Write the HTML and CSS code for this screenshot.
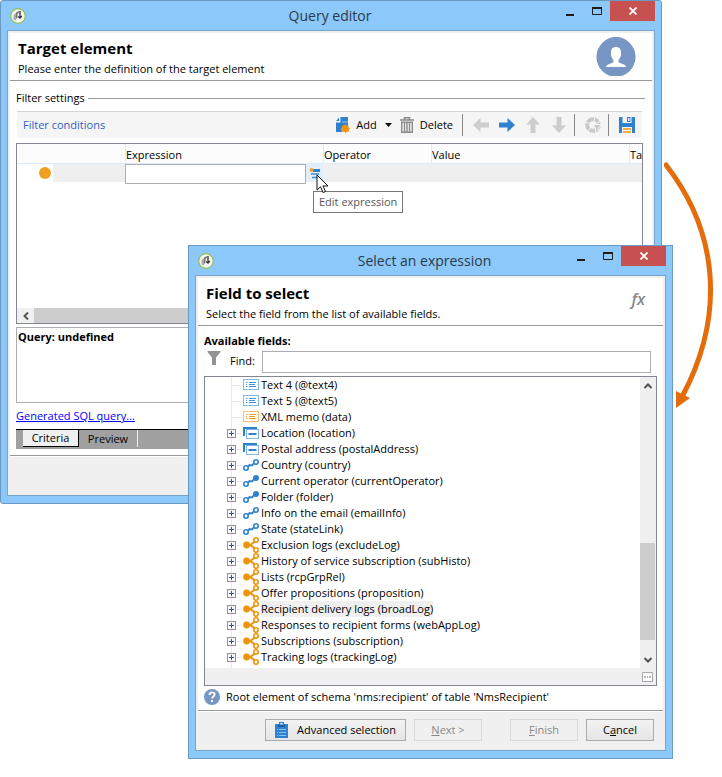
FILE: index.html
```html
<!DOCTYPE html>
<html lang="en">
<head>
<meta charset="utf-8">
<title>Query editor</title>
<link rel="stylesheet" href="styles.css">
</head>
<body>
<svg class="defs" aria-hidden="true">
  <symbol id="app" viewBox="0 0 16 16"><circle cx="8" cy="8" r="7.3" fill="#f4f4f0" stroke="#93bd58" stroke-width="1.2"/><path d="M3.500 7l2.500-2v7.500L3.500 11.500z" fill="#aaa"/><path d="M6 4.500l3-1.500v1.500L7.500 6v3L6 11.500z" fill="#777"/><path d="M10 3v6.500M8 8.500l2 1.500 1.800-2" stroke="#333" stroke-width="1.300" fill="none"/></symbol>
  <symbol id="field" viewBox="0 0 16 12"><rect x=".5" y=".5" width="15" height="10" fill="#fff" stroke="currentColor" stroke-opacity=".65"/><path d="M3 3.500h1.500M3 7.500h1.500M6 3.500h7M6 7.500h7M3 5.500h1M6 5.500h6" stroke="currentColor"/></symbol>
  <symbol id="group" viewBox="0 0 16 12"><path d="M1 9V1h13" fill="none" stroke="#2f80cf" stroke-width="2"/><rect x="3.500" y="2.500" width="12" height="9" fill="#fff" stroke="#80b4e6"/><path d="M5.500 7h8" stroke="#2f80cf" stroke-width="2"/></symbol>
  <symbol id="link" viewBox="0 0 16 12"><path d="M5 7.500L6.500 6l2.500.5L11 4" fill="none" stroke="#2f80cf" stroke-width="1.800"/><circle cx="3" cy="9" r="2.200" fill="#fff" stroke="#2f80cf" stroke-width="1.600"/><circle cx="13" cy="3" r="2.200" fill="#fff" stroke="#2f80cf" stroke-width="1.600"/></symbol>
  <symbol id="linkfull" viewBox="0 0 16 12"><path d="M5 7.500L6.500 6l2.500.5L11 4" fill="none" stroke="#2f80cf" stroke-width="1.800"/><circle cx="3" cy="9" r="2.200" fill="#fff" stroke="#2f80cf" stroke-width="1.600"/><circle cx="13" cy="3" r="3" fill="#2f80cf"/></symbol>
  <symbol id="many" viewBox="0 0 16 16"><path d="M4 8l4-.5L11.500 4.500M4 8l4 .5 3.500 3" fill="none" stroke="#ee9408" stroke-width="2"/><circle cx="3.600" cy="8" r="3.400" fill="#ee9408"/><circle cx="13" cy="3" r="2.200" fill="#fff" stroke="#ee9408" stroke-width="1.600"/><circle cx="13" cy="13" r="2.200" fill="#fff" stroke="#ee9408" stroke-width="1.600"/></symbol>
  <symbol id="arrow" viewBox="0 0 16 16"><path d="M0 5.500h8.500V1L16 8l-7.500 7v-4.500H0z" fill="currentColor"/></symbol>
  <symbol id="min" viewBox="0 0 8 12"><path d="M0 10h8" stroke="#1c1c1c" stroke-width="2"/></symbol>
  <symbol id="max" viewBox="0 0 10 8"><path d="M.5 1h9v6.500h-9z" fill="none" stroke="#1c1c1c"/><path d="M0 1h10" stroke="#1c1c1c" stroke-width="2"/></symbol>
  <symbol id="close" viewBox="0 0 8 8"><path d="M.5.5l7 7M7.500.5l-7 7" stroke="#fff" stroke-width="1.800"/></symbol>
</svg>

<main class="desktop">
<section class="window editor" aria-label="Query editor">
  <header class="titlebar">
    <svg class="app"><use href="#app"/></svg>
    <h1>Query editor</h1>
    <div class="controls">
      <button aria-label="Minimize"><svg class="min"><use href="#min"/></svg></button>
      <button aria-label="Maximize"><svg class="max"><use href="#max"/></svg></button>
      <button class="close" aria-label="Close"><svg class="x"><use href="#close"/></svg></button>
    </div>
  </header>
  <div class="client">
    <div class="banner">
      <div><h2>Target element</h2><p>Please enter the definition of the target element</p></div>
      <svg class="avatar" viewBox="0 0 40 40"><path d="M10 2.700a20 20 0 0 1 20 0A20 20 0 0 1 25 39H15A20 20 0 0 1 10 2.700z" fill="#7796c4"/><path d="M20 10c-3.500 0-5 2.200-5 5.500 0 1 .2 1.700-.1 2.500.2 1.700 1 2 1.500 3.500.4 1.300 1.600 2 1.100 3.500-1 1.500-7.500 2-7.500 5h20c0-3-6.500-3.500-7.500-5-.5-1.500.7-2.200 1.100-3.500.5-1.500 1.300-1.800 1.500-3.500-.3-.8-.1-1.500-.1-2.500 0-3.300-1.500-5.500-5-5.500z" fill="#fff"/></svg>
    </div>
    <div class="editor-body">
      <h3 class="legend">Filter settings</h3>
      <div class="toolbar">
        <span class="caption">Filter conditions</span>
        <button><svg width="14" height="16" viewBox="0 0 14 16"><path d="M4.500 0H12v9.500A4 4 0 0 0 5.500 12L6 15H0V5.500h4.500z" fill="#2e82d0"/><path d="M0 4l3.200-3.500V4z" fill="#2e82d0"/><path d="M6 5h6" stroke="#8fc2ee"/><path d="M9 7l1.200 1.700 2-.6.2 2 1.600 1.200-1.300 1.400.3 2-2 .1-1.300 1.200-1.500-1.200-2 .2.100-2L5 11.500l1.200-1-.3-2 2 .1z" fill="#f09410"/></svg>Add</button>
        <button class="drop" aria-label="More add options"><svg width="7" height="4" viewBox="0 0 7 4"><path d="M0 0h7L3.500 4z" fill="#111"/></svg></button>
        <button class="delete"><svg width="14" height="16" viewBox="0 0 14 16"><path d="M4.500 2.500V.7h5v1.800M0 3h14" fill="none" stroke="#8b8b8b" stroke-width="1.600"/><path d="M1.700 5.200h10.600v10H1.700zM4.500 6v9M7 6v9M9.500 6v9" fill="none" stroke="#8b8b8b" stroke-width="1.400"/></svg>Delete</button>
        <i class="sep"></i>
        <button class="nav off" aria-label="Left"><svg class="left"><use href="#arrow"/></svg></button>
        <button class="nav" aria-label="Right"><svg><use href="#arrow"/></svg></button>
        <button class="nav off" aria-label="Up"><svg class="up"><use href="#arrow"/></svg></button>
        <button class="nav off" aria-label="Down"><svg class="down"><use href="#arrow"/></svg></button>
        <i class="sep"></i>
        <button class="icon" aria-label="Distribution"><svg viewBox="0 0 16 16"><circle cx="8" cy="8" r="5.800" fill="none" stroke="#c9c9c9" stroke-width="4"/><path d="M0 5l4.500 1.500M10 0L9 4M3 14l2.500-3M12 6l4-2" stroke="#f5f5f5"/><path d="M8 7.500h8.500l-3.300 3.800v5l-2.700-1.800v-3.200z" fill="#c9c9c9" stroke="#f5f5f5"/></svg></button>
        <i class="sep"></i>
        <button class="icon" aria-label="Save"><svg viewBox="0 0 16 16"><path d="M0 0h16v16H0z" fill="#2e82d0"/><path d="M3.500 0h9v6h-9zM3 10h10v6H3z" fill="#f5f5f5"/><path d="M8 0h3.500v5H8z" fill="#2e82d0"/><path d="M9 1h1.500v3H9z" fill="#f5f5f5"/><path d="M4 12h8M4 15h8" stroke="#f09410" stroke-width="1.500"/></svg></button>
      </div>
      <div class="grid">
        <table>
          <colgroup><col class="c-dot"><col class="c-type"><col class="c-wide"><col class="c-op"><col class="c-wide"><col></colgroup>
          <thead><tr><th colspan="2"></th><th>Expression</th><th>Operator</th><th>Value</th><th>Ta</th></tr></thead>
          <tbody><tr><td class="dot-cell"><i class="dot"></i></td><td></td>
            <td><div class="expr"><input type="text" aria-label="Expression"><button aria-label="Edit expression"><svg width="11" height="11" viewBox="0 0 11 11"><path d="M4 1h7v3H4z" fill="#2e82d0"/><path d="M2 6h8M3 9.500h7" stroke="#3d8bd3" stroke-width="1.500"/><circle cx="2.500" cy="2" r="2" fill="#f0a030"/></svg></button>
              <svg class="cursor" viewBox="0 0 13 20"><path d="M1 1v15l3.500-3.200L7 18.500l2.500-1-2.500-5.500h5z" fill="#fff" stroke="#111"/></svg><span class="tooltip" role="tooltip">Edit expression</span></div></td>
            <td></td><td></td><td></td></tr></tbody>
        </table>
        <div class="hscroll"><button aria-label="Scroll left"><svg width="6" height="8" viewBox="0 0 6 8"><path d="M5 .5L1.500 4 5 7.500" fill="none" stroke="#555" stroke-width="2"/></svg></button><i></i></div>
      </div>
      <div class="query">Query: undefined</div>
      <a class="sql" href="#sql">Generated SQL query...</a>
      <div class="tabs" role="tablist"><button class="tab current" role="tab" aria-selected="true">Criteria</button><button class="tab" role="tab">Preview</button></div>
    </div>
    <footer class="footer"></footer>
  </div>
</section>

<section class="window picker" aria-label="Select an expression">
  <header class="titlebar">
    <svg class="app"><use href="#app"/></svg>
    <h1>Select an expression</h1>
    <div class="controls">
      <button aria-label="Minimize"><svg class="min"><use href="#min"/></svg></button>
      <button aria-label="Maximize"><svg class="max"><use href="#max"/></svg></button>
      <button class="close" aria-label="Close"><svg class="x"><use href="#close"/></svg></button>
    </div>
  </header>
  <div class="client">
    <div class="banner">
      <div><h2>Field to select</h2><p>Select the field from the list of available fields.</p></div>
      <span class="fx">fx</span>
    </div>
    <div class="picker-body">
      <h3 class="available">Available fields:</h3>
      <div class="find">
        <svg width="14" height="14" viewBox="0 0 14 14"><path d="M.5 0h13v1L9 6.500V14H5V6.500L.5 1z" fill="#929292"/></svg>
        <label for="find">Find:</label><input id="find" type="text">
      </div>
      <div class="tree-box">
        <ul class="tree">
          <li><svg class="i"><use href="#field"/></svg><span>Text 4 (@text4)</span></li>
          <li><svg class="i"><use href="#field"/></svg><span>Text 5 (@text5)</span></li>
          <li><svg class="i xml"><use href="#field"/></svg><span>XML memo (data)</span></li>
          <li><button aria-label="Expand"></button><svg class="i"><use href="#group"/></svg><span>Location (location)</span></li>
          <li><button aria-label="Expand"></button><svg class="i"><use href="#group"/></svg><span>Postal address (postalAddress)</span></li>
          <li><button aria-label="Expand"></button><svg class="i"><use href="#link"/></svg><span>Country (country)</span></li>
          <li><button aria-label="Expand"></button><svg class="i"><use href="#linkfull"/></svg><span>Current operator (currentOperator)</span></li>
          <li><button aria-label="Expand"></button><svg class="i"><use href="#linkfull"/></svg><span>Folder (folder)</span></li>
          <li><button aria-label="Expand"></button><svg class="i"><use href="#link"/></svg><span>Info on the email (emailInfo)</span></li>
          <li><button aria-label="Expand"></button><svg class="i"><use href="#link"/></svg><span>State (stateLink)</span></li>
          <li><button aria-label="Expand"></button><svg class="i m"><use href="#many"/></svg><span>Exclusion logs (excludeLog)</span></li>
          <li><button aria-label="Expand"></button><svg class="i m"><use href="#many"/></svg><span>History of service subscription (subHisto)</span></li>
          <li><button aria-label="Expand"></button><svg class="i m"><use href="#many"/></svg><span>Lists (rcpGrpRel)</span></li>
          <li><button aria-label="Expand"></button><svg class="i m"><use href="#many"/></svg><span>Offer propositions (proposition)</span></li>
          <li><button aria-label="Expand"></button><svg class="i m"><use href="#many"/></svg><span class="selected">Recipient delivery logs (broadLog)</span></li>
          <li><button aria-label="Expand"></button><svg class="i m"><use href="#many"/></svg><span>Responses to recipient forms (webAppLog)</span></li>
          <li><button aria-label="Expand"></button><svg class="i m"><use href="#many"/></svg><span>Subscriptions (subscription)</span></li>
          <li><button aria-label="Expand"></button><svg class="i m"><use href="#many"/></svg><span>Tracking logs (trackingLog)</span></li>
        </ul>
        <div class="vscroll"><button aria-label="Scroll up"><svg width="8" height="6" viewBox="0 0 8 6"><path d="M.5 5L4 1.500 7.500 5" fill="none" stroke="#555" stroke-width="2"/></svg></button><i></i><button aria-label="Scroll down"><svg width="8" height="6" viewBox="0 0 8 6"><path d="M.5 1L4 4.500 7.500 1" fill="none" stroke="#555" stroke-width="2"/></svg></button></div>
        <div class="tree-foot"><button aria-label="Options"><svg width="11" height="10" viewBox="0 0 11 10"><path d="M.5.5h10v9H.5z" fill="#fafafa" stroke="#aaa"/><path d="M2 5h2M5 5h1M7 5h2" stroke="#777"/></svg></button></div>
      </div>
      <p class="hint"><svg width="16" height="16" viewBox="0 0 16 16"><circle cx="8" cy="8" r="8" fill="#7796c4"/><path d="M5.500 6c0-3.500 5.200-3.300 5.200-.4C10.700 7.500 8 7.500 8 9.600M8 11v2" fill="none" stroke="#fff" stroke-width="1.900"/></svg>Root element of schema 'nms:recipient' of table 'NmsRecipient'</p>
    </div>
    <footer class="footer buttons">
      <button class="btn wide"><svg width="13" height="16" viewBox="0 0 13 16"><path d="M0 2h4V0h5v2h4v14H0z" fill="#2e82d0"/><path d="M3 3h7v2H3z" fill="#1c5c9c"/><path d="M5.500 1h2v1.500h-2z" fill="#fff"/><path d="M2 7.500h1M4 7.500h7M2 10.500h1M4 10.500h7M2 13.500h1M4 13.500h7" stroke="#8bc1f1"/></svg>Advanced selection</button>
      <button class="btn next" disabled><span><u>N</u>ext &gt;</span></button>
      <button class="btn finish" disabled><span><u>F</u>inish</span></button>
      <button class="btn"><span>C<u>a</u>ncel</span></button>
    </footer>
  </div>
</section>

<svg class="flow" viewBox="0 0 58 252" aria-hidden="true"><path d="M2 8C52 72 63 154 19 238" fill="none" stroke="#e46c0a" stroke-width="5" stroke-linecap="round"/><path d="M12 234l14 7-14 10z" fill="#e46c0a"/></svg>
</main>
</body>
</html>
```
FILE: styles.css
```css
* { box-sizing: border-box; }
body { margin: 0; background: #fff; color: #000; font: 11px/16px "Open Sans", "Noto Sans", sans-serif; }
h1, h2, h3, p, ul { margin: 0; padding: 0; font-size: inherit; font-weight: normal; }
button, input { font: inherit; color: inherit; }
button { padding: 0; border: 0; background: none; display: flex; align-items: center; justify-content: center; }
svg { display: block; flex: none; }
.defs { position: absolute; width: 0; height: 0; }
.desktop { position: relative; min-height: 777px; overflow: hidden; }

.window { position: absolute; padding: 0 7px 7px; border: 1px solid #699ac5; background: #8cc8fa; }
.editor { left: 0; top: 0; right: 60px; border-radius: 3px; }
.picker { left: 188px; top: 245px; right: 49px; }
.titlebar { display: flex; height: 29px; padding-left: 2px; margin-right: -1px; align-items: center; }
.titlebar .app { width: 16px; height: 16px; }
h1 { flex: 1; padding-left: 78px; text-align: center; font-size: 14px; line-height: 20px; color: #2b3a49; }
.picker h1 { padding-left: 68px; }
.controls { display: flex; align-self: flex-start; }
.controls button { width: 27px; height: 20px; }
.controls .close { width: 45px; background: #c75050; }
.controls .min { width: 8px; height: 12px; }
.controls .max { width: 10px; height: 8px; }
.controls .x { width: 8px; height: 8px; }
.client { padding: 2px; border: 1px solid #75a5cf; margin: 0 -1px; background: #f0f0f0; }
.banner, .editor-body, .picker-body { background: #fff; }
.banner { display: flex; justify-content: space-between; height: 48px; padding: 3px 16px 0 8px; border-bottom: 1px solid #999; }
h2 { margin-bottom: 1px; font-size: 15px; line-height: 24px; font-weight: bold; }
.avatar { width: 40px; height: 40px; margin-top: 1px; }
.fx { padding: 8px 2px; font-size: 16px; line-height: 20px; font-style: italic; font-weight: 600; color: #888; }
.footer { height: 37px; border-top: 1px solid #fff; }

.editor-body { padding: 9px 9px 6px 6px; border-bottom: 1px solid #999; }
.legend { display: flex; align-items: center; gap: 3px; }
.legend::after { content: ""; flex: 1; height: 1px; margin-right: -2px; background: #999; }
.toolbar { display: flex; align-items: center; height: 27px; margin: 5px 1px 5px 1px; padding: 0 7px 0 6px; border-top: 1px solid #d5d5d5; background: #f5f5f5; }
.caption { margin-right: auto; color: #315fc7; }
.toolbar button { gap: 6px; }
.toolbar .drop { width: 23px; }
.sep { width: 1px; height: 22px; margin: 0 10px 0 9px; background: #888; }
.toolbar .nav { margin-right: 10px; color: #2e82d0; }
.toolbar .nav.off { color: #cdcdcd; }
.nav svg, .icon svg { width: 16px; height: 16px; }
.left { transform: rotate(180deg); }
.up { transform: rotate(-90deg); }
.down { transform: rotate(90deg); }
.nav + .sep { margin-left: -3px; }
.icon + .sep { margin-left: 7px; }

.grid { display: flex; flex-direction: column; justify-content: space-between; min-height: 181px; border: 1px solid #82868f; }
table { width: 100%; table-layout: fixed; border-collapse: separate; border-spacing: 0; }
.c-dot { width: 36px; }
.c-type { width: 72px; }
.c-wide { width: 198px; }
.c-op { width: 108px; }
th { height: 20px; padding: 2px 0 0; text-align: left; font-weight: normal; background: #fcfcfc; border-bottom: 1px solid #deebfa; border-left: 1px solid #deebfa; overflow: hidden; white-space: nowrap; }
th:first-child { border-left: 0; }
td { height: 18px; padding: 0; background: #efefef; }
.dot-cell { background: #fff; }
.dot { display: block; width: 12px; height: 12px; margin-left: 22px; border-radius: 50%; background: #f0a020; }
.expr { position: relative; display: flex; height: 18px; }
.expr input { flex: 1; min-width: 0; height: 20px; padding: 0 2px; border: 1px solid #abadb3; background: #fff; }
.expr button { width: 17px; background: #e2effb; }
.cursor { position: absolute; z-index: 2; left: 191px; top: 10px; width: 13px; height: 20px; }
.tooltip { position: absolute; z-index: 1; left: 188px; top: 27px; padding: 2px 5px; border: 1px solid #767676; background: #fff; color: #575757; white-space: nowrap; }
.hscroll { display: flex; height: 15px; }
.hscroll button { width: 17px; background: #f0f0f0; }
.hscroll i { flex: 1; background: #cdcdcd; }
.query { height: 76px; margin-top: 3px; padding: 1px; border: 1px solid #abadb3; font-weight: bold; }
.sql { display: inline-block; margin: 5px 0; color: #00f; }
.tabs { display: flex; height: 20px; padding-left: 7px; background: #a0a0a0; border-top: 1px solid #000; }
.tab { height: 17px; width: 59px; }
.tab.current { width: 56px; background: #f0f0f0; border: solid #000; border-width: 0 1px 1px 0; }
.tab + .tab { border-right: 1px solid #eee; }

.picker-body { padding: 7px 6px 5px; border-bottom: 1px solid #999; }
.available { font-weight: bold; }
.find { display: flex; height: 22px; margin: 2px 6px 3px 3px; line-height: 20px; }
.find label { width: 32px; margin-left: 9px; }
.find input { flex: 1; min-width: 0; height: 22px; border: 1px solid #abadb3; background: #fff; }
.tree-box { display: grid; grid-template-columns: 1fr 16px; border: 1px solid #82868f; }
.tree { list-style: none; height: 291px; overflow: hidden; padding-left: 18px; background: linear-gradient(#e8e8e8, #e8e8e8) 26px 0 / 1px 100% no-repeat; }
.tree li { display: flex; align-items: center; height: 16px; padding-left: 20px; white-space: nowrap; background: linear-gradient(#e8e8e8, #e8e8e8) 9px 8px / 10px 1px no-repeat; }
.tree button { width: 9px; height: 9px; margin: 0 7px 0 -16px; border: 1px solid #919191; background: linear-gradient(#3b4fa0, #3b4fa0) center / 5px 1px no-repeat, linear-gradient(#3b4fa0, #3b4fa0) center / 1px 5px no-repeat, #f7f7f7; }
.i { width: 16px; height: 12px; margin-right: 2px; color: #4594df; }
.xml { color: #ef9c20; }
.i.m { height: 16px; }
.selected { background: #efefef; }
.vscroll { display: flex; flex-direction: column; background: #f0f0f0; }
.vscroll button { height: 17px; }
.vscroll i { width: 15px; height: 97px; margin-top: auto; margin-bottom: 11px; background: #cdcdcd; }
.tree-foot { grid-column: 1 / -1; display: flex; justify-content: flex-end; height: 17px; padding-right: 3px; background: #f0f0f0; }
.hint { display: flex; align-items: center; gap: 6px; margin-top: 3px; }
.buttons { display: flex; justify-content: flex-end; gap: 8px; padding: 7px 9px 0 0; }
.btn { width: 68px; height: 22px; border: 1px solid #acacac; background: linear-gradient(#f2f2f2, #e5e5e5); }
.btn:disabled { color: #888; border-color: #d9d9d9; background: #f0f0f0; }
.btn.wide { width: 141px; gap: 9px; }
.finish { margin-left: 20px; }

.flow { position: absolute; right: 0; top: 157px; width: 58px; height: 252px; }
```
